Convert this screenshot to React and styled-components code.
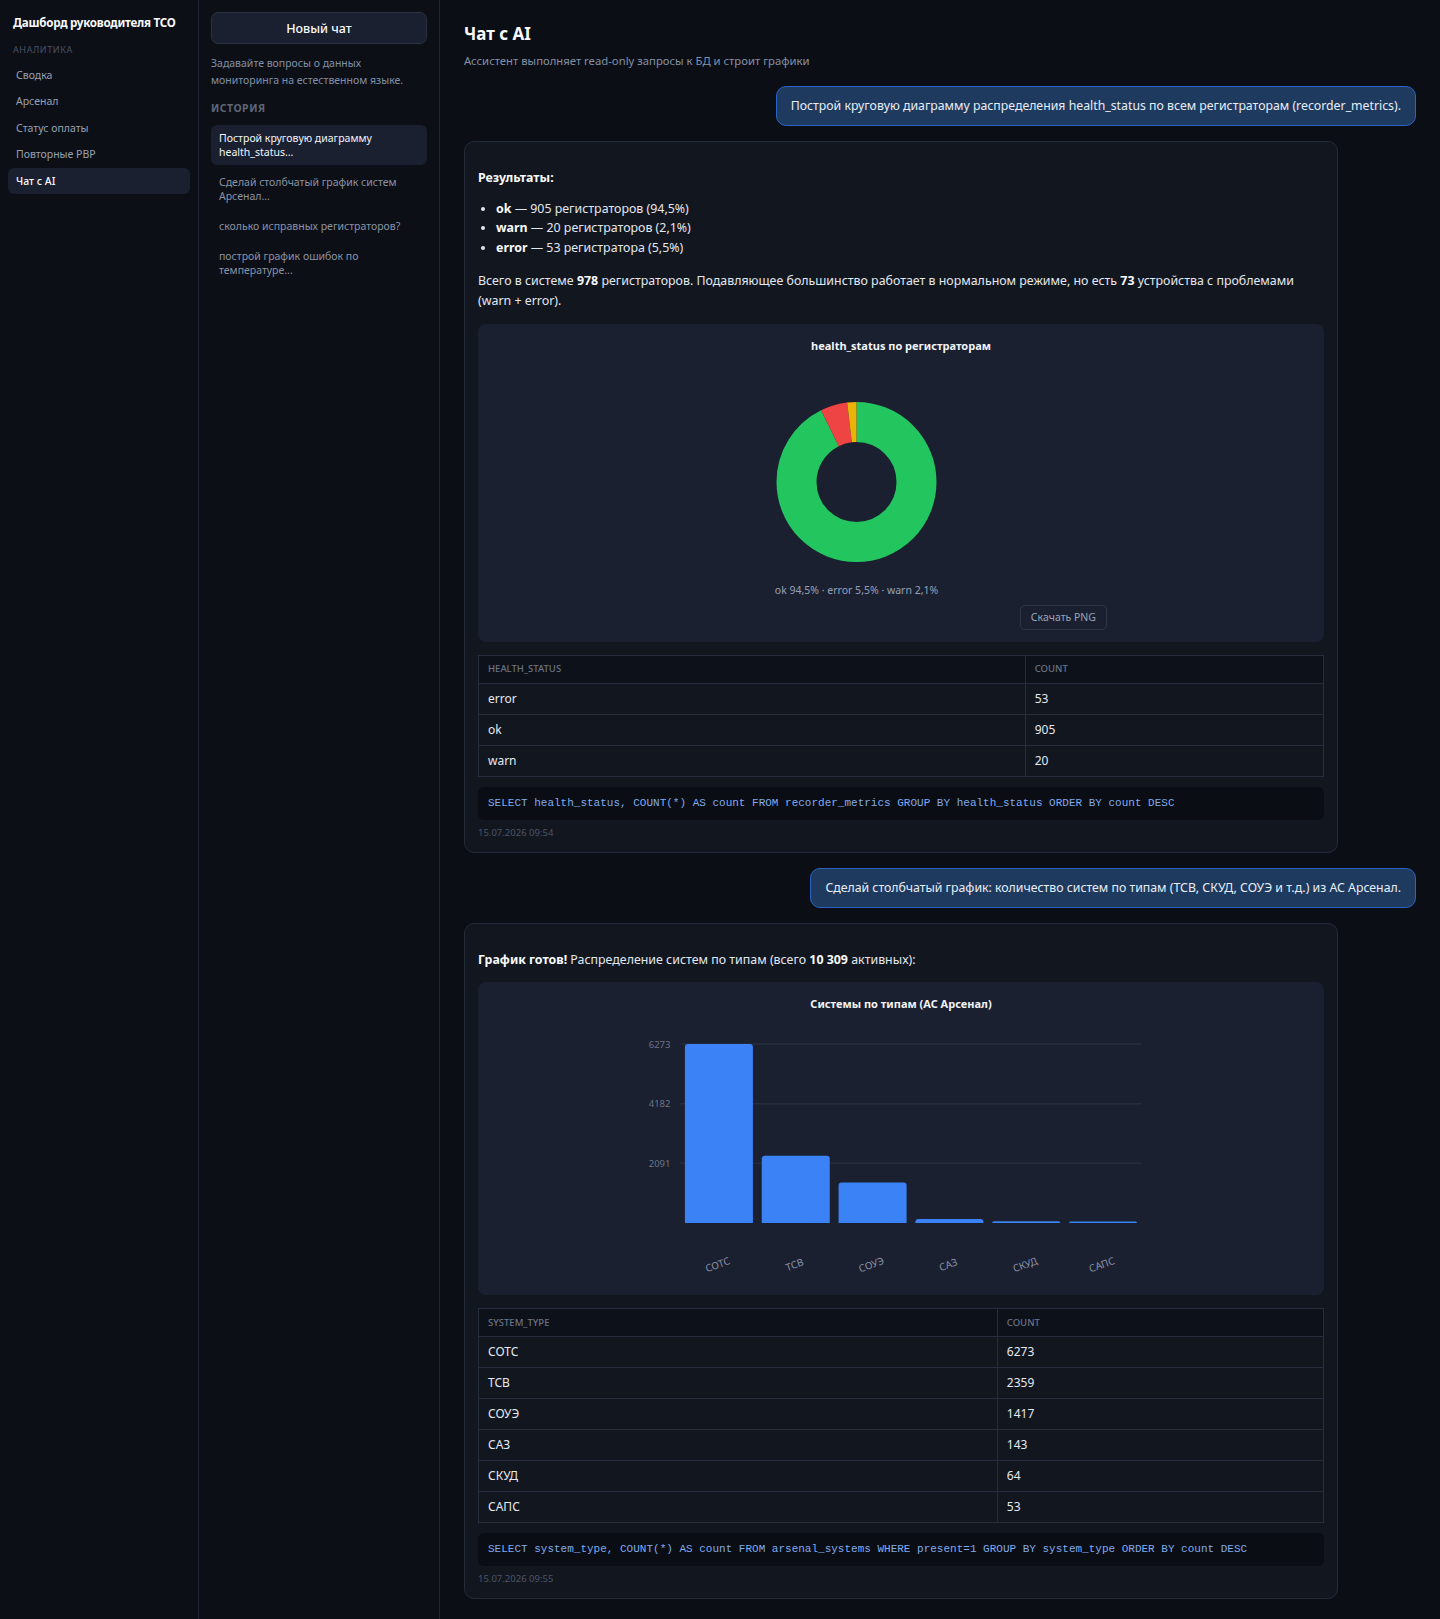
import React from 'react'
import styled, { createGlobalStyle, css } from 'styled-components'

const GlobalStyle = createGlobalStyle`
  * { box-sizing: border-box; }
  body {
    margin: 0;
    background: #0b0e15;
    font-family: "Noto Sans", "Open Sans", sans-serif;
    color: #e2e8f0;
  }
`

const FONT = '"Noto Sans", "Open Sans", sans-serif'

const navItems = ['Сводка', 'Арсенал', 'Статус оплаты', 'Повторные РВР', 'Чат с AI']

const historyItems = [
  'Построй круговую диаграмму health_status...',
  'Сделай столбчатый график систем Арсенал...',
  'сколько исправных регистраторов?',
  'построй график ошибок по температуре...',
]

const healthData = [
  { label: 'ok', value: 905, color: '#22c55e' },
  { label: 'error', value: 53, color: '#ef4444' },
  { label: 'warn', value: 20, color: '#eab308' },
]

const systemData = [
  { label: 'СОТС', value: 6273 },
  { label: 'ТСВ', value: 2359 },
  { label: 'СОУЭ', value: 1417 },
  { label: 'САЗ', value: 143 },
  { label: 'СКУД', value: 64 },
  { label: 'САПС', value: 53 },
]

const Layout = styled.div`
  display: flex;
  min-height: 100vh;
`

const NavSidebar = styled.aside`
  width: 199px;
  flex-shrink: 0;
  padding: 14px 8px;
  background: #0c0f16;
  border-right: 1px solid #1e2431;
`

const Brand = styled.div`
  padding: 0 5px;
  font-size: 11.6px;
  line-height: 18px;
  font-weight: 700;
  color: #f8fafc;
  letter-spacing: -0.25px;
  white-space: nowrap;
`

const SectionLabel = styled.div`
  margin-top: 12px;
  padding: 0 5px;
  font-size: 9px;
  line-height: 12px;
  letter-spacing: 0.6px;
  text-transform: uppercase;
  color: #4a5263;
`

const NavList = styled.nav`
  display: flex;
  flex-direction: column;
  gap: 0.5px;
  margin-top: 5.5px;
`

const NavItem = styled.div`
  height: 26px;
  display: flex;
  align-items: center;
  padding: 0 8px;
  border-radius: 6px;
  font-size: 10.5px;
  color: #98a1b3;
  ${(p) =>
    p.active &&
    css`
      background: #1b2030;
      color: #f8fafc;
      font-weight: 500;
    `}
`

const ChatPanel = styled.aside`
  width: 241px;
  flex-shrink: 0;
  padding: 12px;
  background: #0c0f16;
  border-right: 1px solid #1e2431;
`

const NewChatButton = styled.button`
  width: 100%;
  height: 32px;
  border-radius: 7px;
  border: 1px solid #2a3142;
  background: #1b2030;
  color: #f8fafc;
  font-family: ${FONT};
  font-size: 12.5px;
  font-weight: 500;
  cursor: pointer;
`

const Hint = styled.p`
  margin: 11px 0 0;
  font-size: 10.5px;
  line-height: 17px;
  color: #8190a8;
`

const HistoryLabel = styled.div`
  margin-top: 12px;
  font-size: 10.5px;
  line-height: 14px;
  font-weight: 700;
  letter-spacing: 0.5px;
  color: #5d6677;
`

const HistoryList = styled.div`
  display: flex;
  flex-direction: column;
  gap: 4px;
  margin-top: 10px;
`

const HistoryItem = styled.div`
  padding: 6px 8px;
  border-radius: 6px;
  font-size: 10.5px;
  line-height: 14px;
  color: #8a93a6;
  ${(p) =>
    p.active &&
    css`
      background: #1b2030;
      color: #f1f5f9;
    `}
`

const Main = styled.main`
  flex: 1;
  min-width: 0;
  padding: 22px 24px 21px;
  display: flex;
  flex-direction: column;
`

const PageTitle = styled.h1`
  margin: 0;
  font-size: 17px;
  line-height: 24px;
  font-weight: 700;
  color: #f8fafc;
`

const PageSubtitle = styled.p`
  margin: 7px 0 0;
  font-size: 11.3px;
  line-height: 16px;
  color: #8491a7;
`

const Messages = styled.div`
  display: flex;
  flex-direction: column;
  gap: 15px;
  margin-top: 17px;
`

const UserBubble = styled.div`
  align-self: flex-end;
  padding: 10px 14px;
  border-radius: 10px;
  border: 1px solid #2d63c6;
  background: #1e3a5f;
  color: #e8eef7;
  font-size: 12.3px;
  line-height: 18px;
`

const AssistantCard = styled.div`
  align-self: flex-start;
  width: 874px;
  padding: 26px 13px 13px;
  border-radius: 10px;
  border: 1px solid #232a38;
  background: #12161f;
`

const Body = styled.div`
  display: flex;
  flex-direction: column;
  gap: 12px;
  font-size: 12.4px;
  line-height: 19.6px;
  color: #e2e8f0;

  p,
  ul {
    margin: 0;
  }

  ul {
    padding-left: 18px;
    margin: -1px 0 2px;
  }

  b {
    font-weight: 700;
    color: #f8fafc;
  }
`

const ChartBox = styled.div`
  margin-top: 1px;
  padding: 14px 14px 12px;
  border-radius: 8px;
  background: #1b2030;
`

const ChartTitle = styled.div`
  text-align: center;
  font-size: 11px;
  line-height: 16px;
  font-weight: 700;
  color: #f1f5f9;
`

const ChartStage = styled.div`
  width: 520px;
  margin: 0 auto;
`

const Legend = styled.div`
  width: 431px;
  margin-top: 12px;
  text-align: center;
  font-size: 10.5px;
  line-height: 16px;
  color: #94a0b8;
`

const ChartFooter = styled.div`
  display: flex;
  justify-content: flex-end;
  margin-top: 7px;
  padding-right: 54px;
`

const DownloadButton = styled.button`
  height: 25px;
  padding: 0 10px;
  border-radius: 5px;
  border: 1px solid #2e3546;
  background: transparent;
  color: #98a3b8;
  font-family: ${FONT};
  font-size: 10.5px;
  cursor: pointer;
`

const Table = styled.table`
  width: 100%;
  margin-top: 1px;
  border-collapse: collapse;
  font-size: 12px;
`

const Th = styled.th`
  height: 28px;
  padding: 0 9px;
  text-align: left;
  font-size: 9.5px;
  font-weight: 500;
  text-transform: uppercase;
  color: #6b7487;
  background: #0d1119;
  border: 1px solid #262d3c;
`

const Td = styled.td`
  height: 31px;
  padding: 0 9px;
  color: #e5e9f0;
  border: 1px solid #262d3c;
`

const SqlBlock = styled.pre`
  margin: -2px 0 0;
  padding: 10px;
  border-radius: 6px;
  background: #0a0d13;
  color: #80abee;
  font-family: "Liberation Mono", "Courier New", monospace;
  font-size: 11px;
  line-height: 13px;
  white-space: pre-wrap;
`

const Timestamp = styled.div`
  margin-top: -5px;
  font-size: 9.5px;
  line-height: 12px;
  color: #4d5566;
`

const DonutChart = ({ data }) => {
  const total = data.reduce((s, d) => s + d.value, 0)
  const r = 60
  const c = 2 * Math.PI * r
  let acc = 0
  return (
    <svg width="520" height="216" style={{ display: 'block' }}>
      <g transform="rotate(-90 215.5 128)">
        {data.map((d) => {
          const len = (d.value / total) * c
          const seg = (
            <circle
              key={d.label}
              cx="215.5"
              cy="128"
              r={r}
              fill="none"
              stroke={d.color}
              strokeWidth="40"
              strokeDasharray={`${len} ${c - len}`}
              strokeDashoffset={-acc}
            />
          )
          acc += len
          return seg
        })}
      </g>
    </svg>
  )
}

const barPath = (x, y, w, h) => {
  const r = Math.min(3, h, w / 2)
  return `M${x} ${y + h} V${y + r} Q${x} ${y} ${x + r} ${y} H${x + w - r} Q${x + w} ${y} ${x + w} ${y + r} V${y + h} Z`
}

const BarChart = ({ data }) => {
  const max = Math.max(...data.map((d) => d.value))
  const left = 39.5
  const right = 500.5
  const top = 32
  const base = 211
  const step = (right - left) / data.length
  const barW = 68
  const ticks = [max / 3, (max * 2) / 3, max]
  return (
    <svg width="520" height="271" style={{ display: 'block' }} fontFamily={FONT}>
      {ticks.map((t) => {
        const y = base - (t / max) * (base - top)
        return (
          <g key={t}>
            <line x1={left} x2={right} y1={y} y2={y} stroke="#262c3d" strokeWidth="1.5" />
            <text x={29.5} y={y + 3.5} textAnchor="end" fontSize="9.5" fill="#6b7487">
              {Math.round(t)}
            </text>
          </g>
        )
      })}
      {data.map((d, i) => {
        const h = (d.value / max) * (base - top)
        const x = left + i * step + (step - barW) / 2
        const cx = left + i * step + step / 2
        return (
          <g key={d.label}>
            <path d={barPath(x, base - h, barW, h)} fill="#3b82f6" />
            <text
              x={cx}
              y={256}
              textAnchor="middle"
              fontSize="10"
              fill="#8a93a6"
              transform={`rotate(-20 ${cx} 256)`}
            >
              {d.label}
            </text>
          </g>
        )
      })}
    </svg>
  )
}

const DataTable = ({ columns, rows, firstWidth }) => (
  <Table>
    <colgroup>
      <col style={{ width: firstWidth }} />
      <col />
    </colgroup>
    <thead>
      <tr>
        {columns.map((c) => (
          <Th key={c}>{c}</Th>
        ))}
      </tr>
    </thead>
    <tbody>
      {rows.map((r) => (
        <tr key={r[0]}>
          <Td>{r[0]}</Td>
          <Td>{r[1]}</Td>
        </tr>
      ))}
    </tbody>
  </Table>
)

export default function App() {
  return (
    <>
      <GlobalStyle />
      <Layout>
        <NavSidebar>
          <Brand>Дашборд руководителя ТСО</Brand>
          <SectionLabel>Аналитика</SectionLabel>
          <NavList>
            {navItems.map((item) => (
              <NavItem key={item} active={item === 'Чат с AI'}>
                {item}
              </NavItem>
            ))}
          </NavList>
        </NavSidebar>

        <ChatPanel>
          <NewChatButton>Новый чат</NewChatButton>
          <Hint>Задавайте вопросы о данных мониторинга на естественном языке.</Hint>
          <HistoryLabel>ИСТОРИЯ</HistoryLabel>
          <HistoryList>
            {historyItems.map((item, i) => (
              <HistoryItem key={item} active={i === 0}>
                {item}
              </HistoryItem>
            ))}
          </HistoryList>
        </ChatPanel>

        <Main>
          <PageTitle>Чат с AI</PageTitle>
          <PageSubtitle>Ассистент выполняет read-only запросы к БД и строит графики</PageSubtitle>

          <Messages>
            <UserBubble>
              Построй круговую диаграмму распределения health_status по всем регистраторам
              (recorder_metrics).
            </UserBubble>

            <AssistantCard>
              <Body>
                <p>
                  <b>Результаты:</b>
                </p>
                <ul>
                  <li>
                    <b>ok</b> — 905 регистраторов (94,5%)
                  </li>
                  <li>
                    <b>warn</b> — 20 регистраторов (2,1%)
                  </li>
                  <li>
                    <b>error</b> — 53 регистратора (5,5%)
                  </li>
                </ul>
                <p>
                  Всего в системе <b>978</b> регистраторов. Подавляющее большинство работает в
                  нормальном режиме, но есть <b>73</b> устройства с проблемами (warn + error).
                </p>
                <ChartBox>
                  <ChartTitle>health_status по регистраторам</ChartTitle>
                  <ChartStage>
                    <DonutChart data={healthData} />
                    <Legend>ok 94,5% · error 5,5% · warn 2,1%</Legend>
                    <ChartFooter>
                      <DownloadButton>Скачать PNG</DownloadButton>
                    </ChartFooter>
                  </ChartStage>
                </ChartBox>
                <DataTable
                  columns={['health_status', 'count']}
                  firstWidth="64.7%"
                  rows={[
                    ['error', 53],
                    ['ok', 905],
                    ['warn', 20],
                  ]}
                />
                <SqlBlock>
                  SELECT health_status, COUNT(*) AS count FROM recorder_metrics GROUP BY
                  health_status ORDER BY count DESC
                </SqlBlock>
                <Timestamp>15.07.2026 09:54</Timestamp>
              </Body>
            </AssistantCard>

            <UserBubble>
              Сделай столбчатый график: количество систем по типам (ТСВ, СКУД, СОУЭ и т.д.) из АС
              Арсенал.
            </UserBubble>

            <AssistantCard>
              <Body>
                <p>
                  <b>График готов!</b> Распределение систем по типам (всего <b>10 309</b>{' '}
                  активных):
                </p>
                <ChartBox>
                  <ChartTitle>Системы по типам (АС Арсенал)</ChartTitle>
                  <ChartStage>
                    <BarChart data={systemData} />
                  </ChartStage>
                </ChartBox>
                <DataTable
                  columns={['system_type', 'count']}
                  firstWidth="61.4%"
                  rows={systemData.map((d) => [d.label, d.value])}
                />
                <SqlBlock>
                  SELECT system_type, COUNT(*) AS count FROM arsenal_systems WHERE present=1 GROUP
                  BY system_type ORDER BY count DESC
                </SqlBlock>
                <Timestamp>15.07.2026 09:55</Timestamp>
              </Body>
            </AssistantCard>
          </Messages>
        </Main>
      </Layout>
    </>
  )
}
